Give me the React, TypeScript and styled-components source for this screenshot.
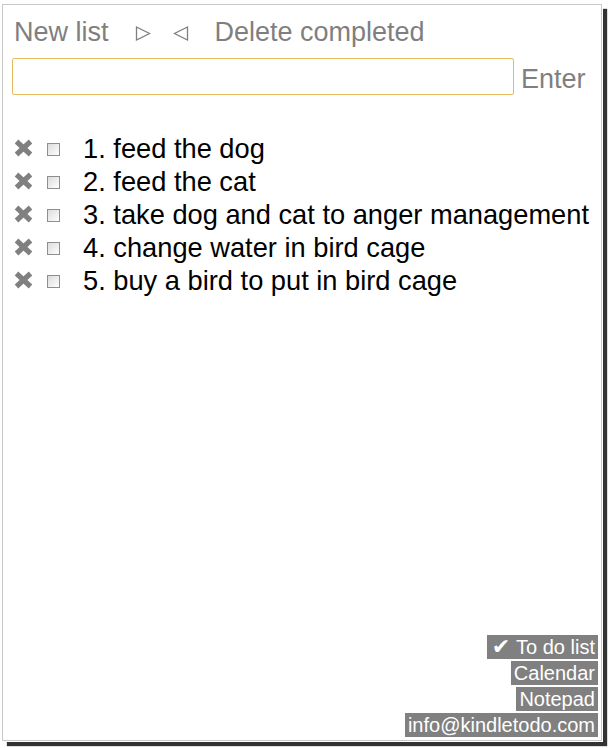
import React from "react";
import styled, { createGlobalStyle } from "styled-components";

const Global = createGlobalStyle`
  html, body { margin: 0; padding: 0; background: #ffffff; }
  body { font-family: "Liberation Sans", Arial, sans-serif; }
`;

const Page = styled.div`
  padding: 4px 0 0 2px;
  width: 610px;
  height: 748px;
  box-sizing: border-box;
`;

const Frame = styled.div`
  width: 600px;
  height: 737px;
  box-sizing: border-box;
  border: 1px solid #c9c9c9;
  box-shadow: 0 0 0 1px #ffffff, 5px 5px 1px rgba(0, 0, 0, 0.8);
  background: #fff;
  display: flex;
  flex-direction: column;
  padding: 12px 3px 3px 9px;
`;

const Toolbar = styled.div`
  display: flex;
  align-items: center;
  height: 30px;
  font-size: 27px;
  line-height: 30px;
  color: #7f7f7f;
  padding-left: 2px;
`;

const ToolLink = styled.span<{ $ml?: number }>`
  margin-left: ${(p) => p.$ml ?? 0}px;
  cursor: pointer;
  white-space: nowrap;
`;

const Arrow = styled.svg<{ $ml: number }>`
  margin-left: ${(p) => p.$ml}px;
  width: 16px;
  height: 15px;
  margin-top: 3px;
  flex: none;
`;

const EntryRow = styled.div`
  display: flex;
  align-items: center;
  margin-top: 11px;
`;

const Input = styled.div`
  width: 502px;
  height: 37px;
  box-sizing: border-box;
  border: 1px solid #e8b95e;
  border-radius: 2px;
  background: #fff;
`;

const EnterLabel = styled.span`
  margin-left: 7px;
  font-size: 27px;
  line-height: 30px;
  color: #7f7f7f;
  margin-top: 4px;
`;

const List = styled.div`
  flex: 1;
  display: flex;
  flex-direction: column;
  margin-top: 37px;
`;

const Row = styled.div`
  display: flex;
  align-items: center;
  height: 33px;
  font-size: 27.25px;
  line-height: 33px;
  color: #000;
  padding-left: 2px;
`;

const DeleteIcon = styled.svg`
  width: 19px;
  height: 18px;
  flex: none;
  margin-top: -2px;
`;

const Check = styled.span`
  width: 13px;
  height: 13px;
  box-sizing: border-box;
  border: 1px solid #8e8e8e;
  background: linear-gradient(135deg, #dcdcdc 0%, #f4f4f4 70%, #ffffff 100%);
  margin-left: 14px;
  flex: none;
  margin-top: 1px;
`;

const ItemText = styled.span`
  margin-left: 23px;
  white-space: nowrap;
`;

const Nav = styled.div`
  display: flex;
  flex-direction: column;
  align-items: flex-end;
  gap: 2px;
`;

const NavLink = styled.span`
  display: flex;
  align-items: center;
  height: 24px;
  line-height: 24px;
  padding: 0 3px;
  background: #808080;
  color: #ffffff;
  font-size: 20px;
  white-space: nowrap;
`;

const Tick = styled.span`
  font-family: "DejaVu Sans", sans-serif;
  font-size: 22px;
  line-height: 24px;
  margin-right: 6px;
  margin-left: 2px;
`;

const items = [
  "feed the dog",
  "feed the cat",
  "take dog and cat to anger management",
  "change water in bird cage",
  "buy a bird to put in bird cage",
];

export default function App() {
  return (
    <>
      <Global />
      <Page>
        <Frame>
          <Toolbar>
            <ToolLink>New list</ToolLink>
            <Arrow $ml={26} viewBox="0 0 16 15">
              <polygon points="1.5,1 14.5,7.5 1.5,14" fill="none" stroke="#7f7f7f" strokeWidth="1.3" />
            </Arrow>
            <Arrow $ml={22} viewBox="0 0 16 15">
              <polygon points="14.5,1 1.5,7.5 14.5,14" fill="none" stroke="#7f7f7f" strokeWidth="1.3" />
            </Arrow>
            <ToolLink $ml={26}>Delete completed</ToolLink>
          </Toolbar>
          <EntryRow>
            <Input />
            <EnterLabel>Enter</EnterLabel>
          </EntryRow>
          <List>
            {items.map((t, i) => (
              <Row key={i}>
                <DeleteIcon viewBox="0 0 19 18">
                  <g stroke="#808080" strokeWidth="5.2" strokeLinecap="butt">
                    <line x1="2.5" y1="2.5" x2="16.5" y2="15.5" />
                    <line x1="16.5" y1="2.5" x2="2.5" y2="15.5" />
                  </g>
                </DeleteIcon>
                <Check />
                <ItemText>
                  {i + 1}. {t}
                </ItemText>
              </Row>
            ))}
          </List>
          <Nav>
            <NavLink>
              <Tick>✔</Tick>To do list
            </NavLink>
            <NavLink>Calendar</NavLink>
            <NavLink>Notepad</NavLink>
            <NavLink>info@kindletodo.com</NavLink>
          </Nav>
        </Frame>
      </Page>
    </>
  );
}
